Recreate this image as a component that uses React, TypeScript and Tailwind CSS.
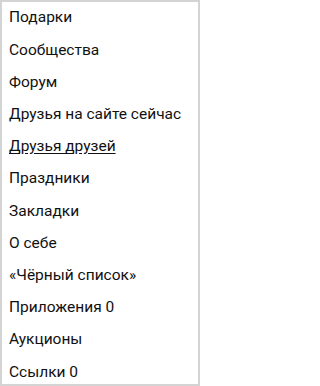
const items: { label: string; active?: boolean }[] = [
  { label: "Подарки" },
  { label: "Сообщества" },
  { label: "Форум" },
  { label: "Друзья на сайте сейчас" },
  { label: "Друзья друзей", active: true },
  { label: "Праздники" },
  { label: "Закладки" },
  { label: "О себе" },
  { label: "«Чёрный список»" },
  { label: "Приложения 0" },
  { label: "Аукционы" },
  { label: "Ссылки 0" },
]

export default function App() {
  return (
    <div className="w-[200px] h-[386px] bg-white border-2 border-[#d4d4d4] font-['Roboto',sans-serif] text-[15.5px] text-[#111]">
      <ul className="flex flex-col">
        {items.map((item) => (
          <li key={item.label} className="h-[32.2px] flex items-center pl-[7px]">
            <span className={item.active ? "underline underline-offset-2" : ""}>{item.label}</span>
          </li>
        ))}
      </ul>
    </div>
  )
}
